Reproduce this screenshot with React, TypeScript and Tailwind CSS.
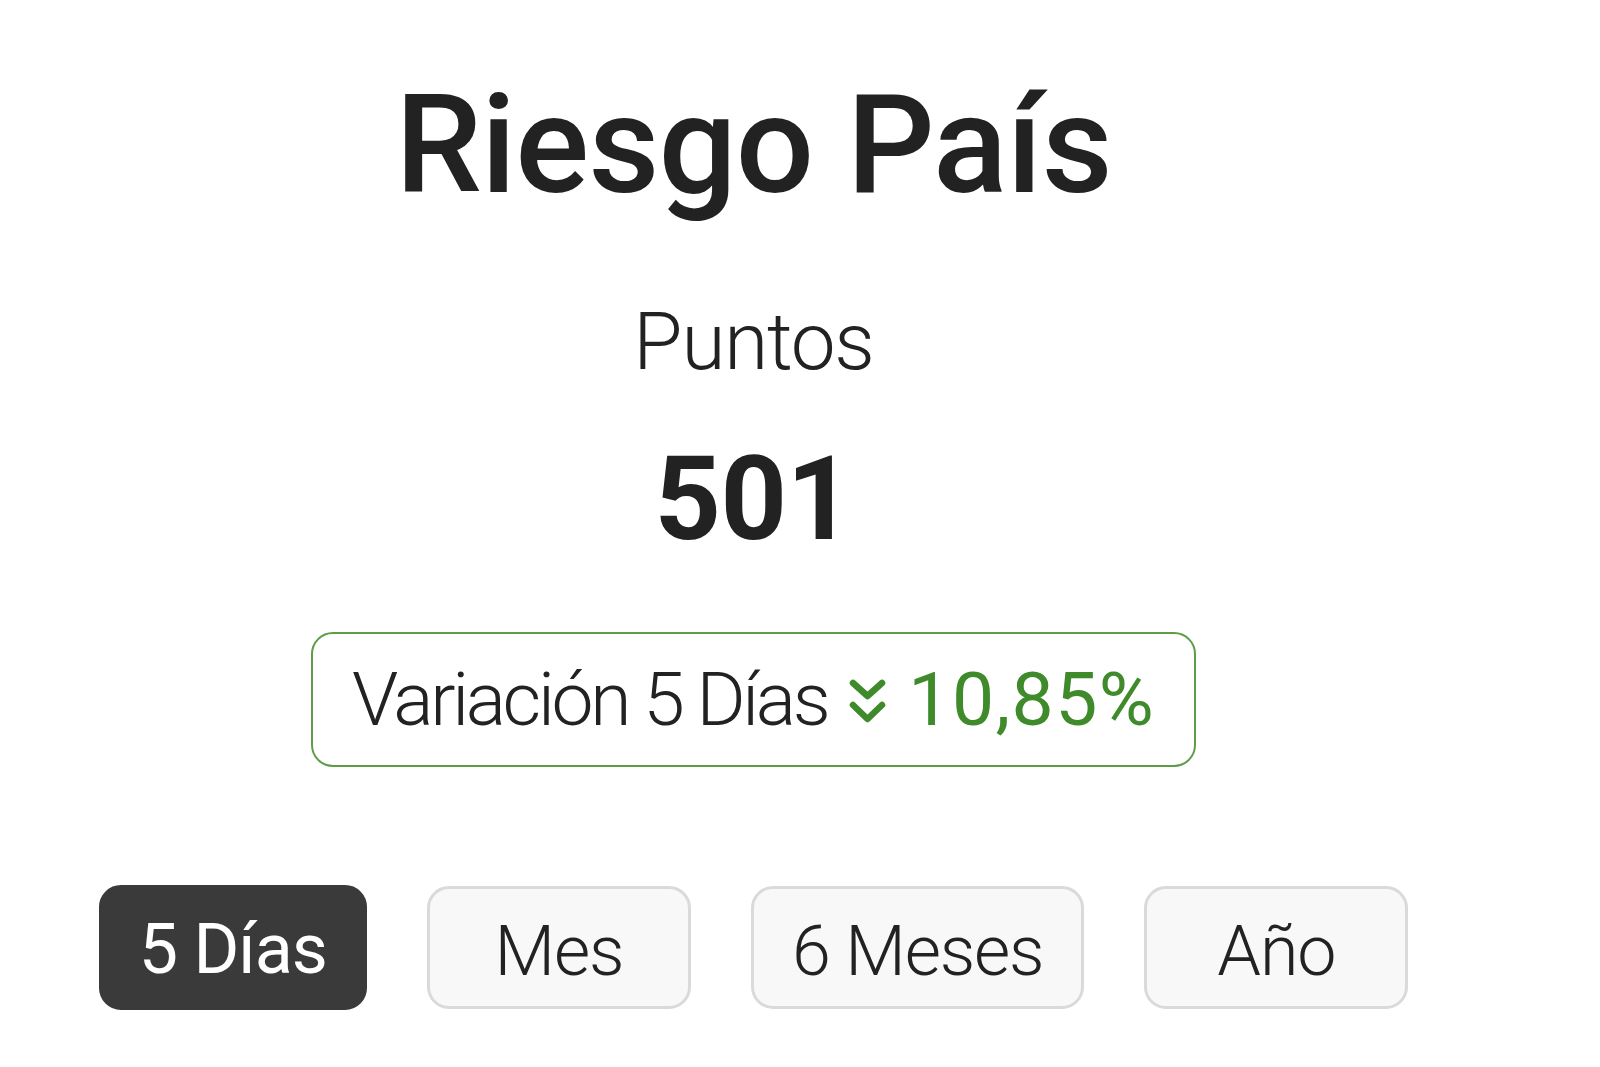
import React from "react";

const periods = ["5 Días", "Mes", "6 Meses", "Año"];

function DoubleChevronDown() {
  return (
    <svg width="37" height="45" viewBox="0 0 37 45" fill="none" className="mx-[22px] mt-[4px] self-center">
      <path d="M4 4 L18.5 17 L33 4" stroke="#3f8a2b" strokeWidth="6.5" strokeLinecap="round" strokeLinejoin="round" />
      <path d="M4 26 L18.5 40 L33 26" stroke="#3f8a2b" strokeWidth="6.5" strokeLinecap="round" strokeLinejoin="round" />
    </svg>
  );
}

export default function App() {
  const active = "5 Días";
  return (
    <div className="min-h-screen bg-white" style={{ fontFamily: "Roboto, 'Noto Sans', sans-serif" }}>
      <div className="w-[1507px] flex flex-col items-center text-[#222222]">
        <h1 className="mt-[76px] text-[138px] leading-none font-medium tracking-[-0.9px]">Riesgo País</h1>
        <div className="mt-[88px] text-[80px] leading-none font-light tracking-[-1.2px]">Puntos</div>
        <div className="mt-[59px] text-[116px] leading-none font-bold tracking-[-0.5px]">501</div>
        <div className="mt-[75px] flex items-center rounded-[22px] border-2 border-[#5e9c45] pl-[39px] pr-[39px] py-[28px]">
          <span className="text-[75px] leading-none font-light tracking-[-3.3px]">Variación 5 Días</span>
          <DoubleChevronDown />
          <span className="text-[75px] leading-none font-normal tracking-[1.4px] text-[#3f8a2b]">10,85%</span>
        </div>
        <div className="mt-[118px] flex items-center gap-[60px]">
          {periods.map((p) =>
            p === active ? (
              <button
                key={p}
                className="min-w-[266px] rounded-[22px] border-2 border-[#3a3a3a] bg-[#3a3a3a] px-[38px] pt-[27px] pb-[24px] text-[70px] leading-none font-normal tracking-[-1px] text-white"
              >
                {p}
              </button>
            ) : (
              <button
                key={p}
                className="min-w-[264px] rounded-[22px] border-[3px] border-[#dadada] bg-[#f8f8f8] px-[38px] pt-[27px] pb-[20px] text-[70px] leading-none font-light tracking-[-1.2px] text-[#222222]"
              >
                {p}
              </button>
            )
          )}
        </div>
      </div>
    </div>
  );
}
